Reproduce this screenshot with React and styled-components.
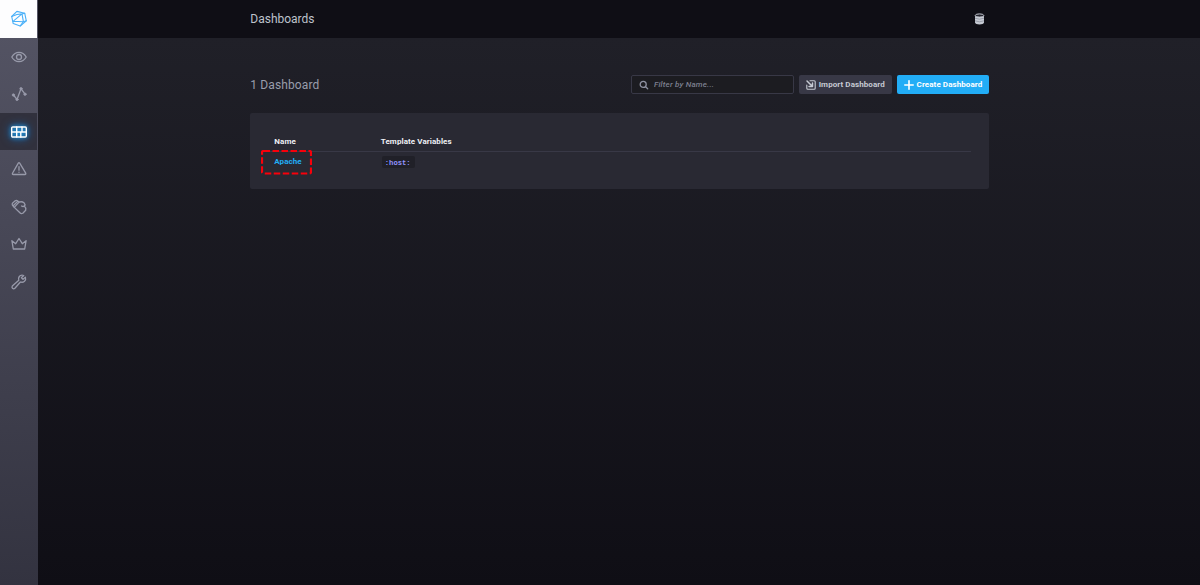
import React from 'react';
import styled, { createGlobalStyle, css } from 'styled-components';

const GlobalStyle = createGlobalStyle`
  * {
    box-sizing: border-box;
  }

  body {
    margin: 0;
    background: #0f0e15;
    font-family: Roboto, 'Liberation Sans', sans-serif;
  }
`;

const Layout = styled.div`
  display: flex;
  height: 100vh;
  overflow: hidden;
`;

const Sidebar = styled.nav`
  flex: 0 0 37.5px;
  background: linear-gradient(to bottom, #555565 0%, #333340 100%);
`;

const NavItem = styled.a`
  display: flex;
  align-items: center;
  justify-content: center;
  width: 37.4px;
  height: 37.5px;
  padding-top: 1px;
  color: #989aaa;

  ${({ $logo }) => $logo && css`
    background: #fdfdfe;
    color: #4ab0f8;
  `}

  ${({ $active }) => $active && css`
    background: #31313d;
    color: #ffffff;

    svg {
      filter: drop-shadow(0 0 2px #22adf6) drop-shadow(0 0 4px #1668b8);
    }
  `}
`;

const Icon = styled.svg`
  display: block;
  width: 18px;
  height: 18px;
  overflow: visible;
  fill: none;
  stroke: currentColor;
  stroke-width: 1.3;
  stroke-linecap: round;
  stroke-linejoin: round;
`;

const Page = styled.div`
  flex: 1;
  display: flex;
  flex-direction: column;
`;

const Header = styled.header`
  height: 37.5px;
  background: #0f0e15;
`;

const Container = styled.div`
  width: 739px;
  margin-left: 212.8px;
`;

const HeaderContent = styled(Container)`
  display: flex;
  align-items: center;
  justify-content: space-between;
  height: 100%;
  padding-right: 4.5px;
`;

const PageTitle = styled.h1`
  margin: 0;
  color: #bec2cc;
  font-size: 12px;
  font-weight: 400;
`;

const SourceIcon = styled.svg`
  width: 11px;
  height: 12px;
`;

const Content = styled.main`
  flex: 1;
  padding-top: 37px;
  background: linear-gradient(to bottom, #202028 0%, #0f0e15 100%);
`;

const Toolbar = styled.div`
  display: flex;
  align-items: center;
  height: 20px;
`;

const Count = styled.h2`
  flex: 1;
  margin: 0;
  color: #999dab;
  font-size: 12px;
  font-weight: 400;
  letter-spacing: 0.12px;
`;

const Search = styled.label`
  display: flex;
  align-items: center;
  width: 163px;
  height: 19px;
  padding-left: 7px;
  border: 1px solid #383846;
  border-radius: 2px;
  background: #1c1c21;
  color: #8e91a1;

  svg {
    width: 10px;
    height: 10px;
  }
`;

const SearchInput = styled.input`
  width: 130px;
  margin-left: 5px;
  padding: 0;
  border: 0;
  outline: 0;
  background: transparent;
  color: #bec2cc;
  font: 500 8px Roboto, sans-serif;
  letter-spacing: 0.2px;

  &::placeholder {
    color: #7d8090;
    font-style: italic;
    opacity: 1;
  }
`;

const Button = styled.button`
  display: flex;
  align-items: center;
  justify-content: center;
  gap: 3px;
  width: 92.7px;
  height: 19px;
  margin-left: 5px;
  padding: 0;
  border: 0;
  border-radius: 2px;
  background: ${({ $primary }) => ($primary ? '#22adf6' : '#383846')};
  color: ${({ $primary }) => ($primary ? '#ffffff' : '#c6cad3')};
  font: 700 8px Roboto, sans-serif;
  letter-spacing: 0.08px;
  white-space: nowrap;

  svg {
    width: 10px;
    height: 10px;
  }
`;

const Panel = styled.section`
  height: 76.5px;
  margin-top: 18px;
  padding: 19px 18.5px 0 19px;
  border-radius: 2px;
  background: #292933;
`;

const Row = styled.div`
  display: grid;
  grid-template-columns: 106.5px 1fr;
  align-items: center;
  height: ${({ $head }) => ($head ? '20px' : '21px')};
  padding-left: 5px;
  border-bottom: ${({ $head }) => ($head ? '1px solid #383846' : '0')};
  color: #eef0f5;
  font-size: 8px;
  font-weight: 700;
  letter-spacing: 0.08px;
`;

const NameCell = styled.div`
  position: relative;
  margin-top: -1px;
`;

const DashboardLink = styled.a`
  color: #22adf6;
`;

const Highlight = styled.svg`
  position: absolute;
  top: -7px;
  left: -13px;
  width: 51px;
  height: 25px;
  fill: none;
  stroke: #f8000b;
  stroke-width: 2.2;
  stroke-dasharray: 6.5 2.5;
`;

const Variable = styled.code`
  display: inline-block;
  height: 12px;
  margin-left: 1px;
  padding: 0 4px 0 3px;
  border-radius: 2px;
  background: #202028;
  color: #9394ff;
  font: 700 7.2px/14px 'Liberation Mono', monospace;
  letter-spacing: 0;
`;

const navItems = [
  {
    id: 'logo',
    logo: true,
    drawing: (
      <g strokeWidth="1.1">
        <path d="M6.9 1.4 14.7 3.2 16.3 10.8 10.2 16 3.2 13.6 1.7 6.5z" />
        <path d="M1.7 6.5 6.9 4.5 12 3.9 14.7 3.2M12 3.9 3 11.3M12 3.9 13.4 11.7 3 11.3M13.4 11.7 16.3 10.8M13.4 11.7 10.2 16" />
      </g>
    ),
  },
  {
    id: 'hosts',
    drawing: (
      <g>
        <path d="M1.8 9C3.5 6 6 4.3 9 4.3S14.5 6 16.2 9C14.5 12 12 13.7 9 13.7S3.5 12 1.8 9z" />
        <circle cx="9" cy="9" r="2.5" />
      </g>
    ),
  },
  {
    id: 'explore',
    drawing: (
      <g>
        <path d="M3.4 10 7 14.4 11 3.7 15 9.2" />
        <g fill="currentColor" strokeWidth="0.7">
          <circle cx="3.4" cy="10" r="1.2" />
          <circle cx="7" cy="14.4" r="1.2" />
          <circle cx="11" cy="3.7" r="1.2" />
          <circle cx="15" cy="9.2" r="1.2" />
        </g>
      </g>
    ),
  },
  {
    id: 'dashboards',
    active: true,
    drawing: (
      <g strokeWidth="1.4">
        <rect x="1.7" y="4" width="14.6" height="10" rx="1" />
        <path d="M1.7 9H16.3M6.7 4V14M12 4V9M10.8 9V14" />
      </g>
    ),
  },
  {
    id: 'alerts',
    drawing: (
      <g>
        <path d="M8.3 3.1Q9 2.1 9.7 3.1L15.7 13.2Q16.2 14.5 14.9 14.5H3.3Q2 14.5 2.5 13.2z" />
        <path d="M9 6.7V10.2M9 12.2V12.3" />
      </g>
    ),
  },
  {
    id: 'logs',
    drawing: (
      <g>
        <path d="M2.4 7.2Q1.7 5.8 2.9 4.7L5 2.9Q6.4 1.9 7.7 3L9 4.1Q12 3.1 14.2 4.9Q15.7 6.5 14.3 8.1Q16.4 10 15.7 12.2L12.8 15.2Q11.2 16.1 9.9 14.8L4.3 9.4z" />
        <path d="M4.3 9.4 9 4.1M3.2 7.8 7.6 3.4M11.5 8Q13 8.9 14.3 8.1" />
      </g>
    ),
  },
  {
    id: 'admin',
    drawing: <path d="M3.3 14 1.9 5.7 5.7 8.7 9 3.5 12.3 8.7 16.1 5.7 14.7 14z" />,
  },
  {
    id: 'config',
    drawing: (
      <path d="M13.7 2.5Q10.8 1.6 9.3 3.5Q8 5.3 8.8 7.2L2.3 13.1Q1.5 14.1 2.5 15.3Q3.7 16.4 4.9 15.3L10.4 9Q12.8 9.7 14.5 8.2Q16.2 6.6 15.4 4.1L13 6.4 11.4 4.8z" />
    ),
  },
];

const dashboards = [{ id: 1, name: 'Apache', variable: ':host:' }];

const App = () => (
  <>
    <GlobalStyle />
    <Layout>
      <Sidebar>
        {navItems.map((item) => (
          <NavItem key={item.id} $logo={item.logo} $active={item.active}>
            <Icon viewBox="0 0 18 18">{item.drawing}</Icon>
          </NavItem>
        ))}
      </Sidebar>
      <Page>
        <Header>
          <HeaderContent>
            <PageTitle>Dashboards</PageTitle>
            <SourceIcon viewBox="0 0 11 12">
              <path d="M1 2.5V9.5C1 12 10 12 10 9.5V2.5" fill="#c6cad3" />
              <ellipse cx="5.5" cy="2.5" rx="4.3" ry="1.6" fill="#24242e" stroke="#c6cad3" />
              <path d="M1 5.2Q5.5 7.2 10 5.2M1 7.8Q5.5 9.8 10 7.8" fill="none" stroke="#7b7e8c" strokeWidth="0.6" />
            </SourceIcon>
          </HeaderContent>
        </Header>
        <Content>
          <Container>
            <Toolbar>
              <Count>1 Dashboard</Count>
              <Search>
                <Icon viewBox="0 0 10 10">
                  <circle cx="4.2" cy="4.4" r="3" />
                  <path d="M6.6 6.8 8.7 8.7" />
                </Icon>
                <SearchInput placeholder="Filter by Name..." />
              </Search>
              <Button>
                <Icon viewBox="0 0 10 10">
                  <path d="M4 .8H8.2Q9.2.8 9.2 1.8V8.2Q9.2 9.2 8.2 9.2H1.8Q.8 9.2.8 8.2V5" strokeWidth="1.1" />
                  <path d="M1 1 6 6M6.5 3V6.5H3" strokeWidth="1.5" />
                </Icon>
                Import Dashboard
              </Button>
              <Button $primary>
                <Icon viewBox="0 0 10 10">
                  <path d="M5 .8V9.2M.8 5H9.2" strokeWidth="1.6" />
                </Icon>
                Create Dashboard
              </Button>
            </Toolbar>
            <Panel>
              <Row $head>
                <div>Name</div>
                <div>Template Variables</div>
              </Row>
              {dashboards.map((dashboard) => (
                <Row key={dashboard.id}>
                  <NameCell>
                    <DashboardLink>{dashboard.name}</DashboardLink>
                    <Highlight viewBox="0 0 51 25">
                      <rect x="1" y="1" width="49" height="22.5" rx="1.5" />
                    </Highlight>
                  </NameCell>
                  <div>
                    <Variable>{dashboard.variable}</Variable>
                  </div>
                </Row>
              ))}
            </Panel>
          </Container>
        </Content>
      </Page>
    </Layout>
  </>
);

export default App;
